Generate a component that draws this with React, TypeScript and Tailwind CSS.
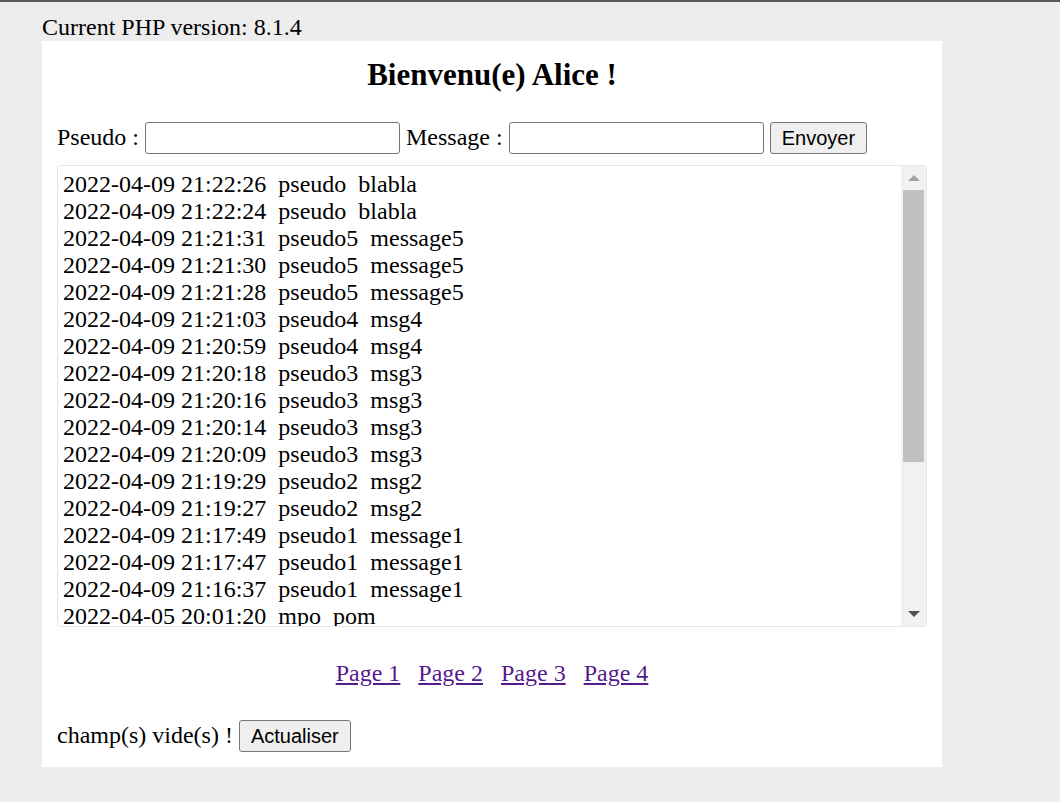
import React from "react";

const rows: [string, string, string][] = [
  ["2022-04-09 21:22:26", "pseudo", "blabla"],
  ["2022-04-09 21:22:24", "pseudo", "blabla"],
  ["2022-04-09 21:21:31", "pseudo5", "message5"],
  ["2022-04-09 21:21:30", "pseudo5", "message5"],
  ["2022-04-09 21:21:28", "pseudo5", "message5"],
  ["2022-04-09 21:21:03", "pseudo4", "msg4"],
  ["2022-04-09 21:20:59", "pseudo4", "msg4"],
  ["2022-04-09 21:20:18", "pseudo3", "msg3"],
  ["2022-04-09 21:20:16", "pseudo3", "msg3"],
  ["2022-04-09 21:20:14", "pseudo3", "msg3"],
  ["2022-04-09 21:20:09", "pseudo3", "msg3"],
  ["2022-04-09 21:19:29", "pseudo2", "msg2"],
  ["2022-04-09 21:19:27", "pseudo2", "msg2"],
  ["2022-04-09 21:17:49", "pseudo1", "message1"],
  ["2022-04-09 21:17:47", "pseudo1", "message1"],
  ["2022-04-09 21:16:37", "pseudo1", "message1"],
  ["2022-04-05 20:01:20", "mpo", "pom"],
];

export default function App() {
  return (
    <div className="min-h-[802px] bg-[#ededed] border-t-2 border-[#595959] text-black text-[24px] leading-[27px] font-['Liberation_Serif','Times_New_Roman',serif]">
      <div className="pl-[42px] pt-[12px]">Current PHP version: 8.1.4</div>
      <div className="ml-[42px] w-[900px] bg-white px-[15px] pb-[15px]">
        <h2 className="pt-[17px] text-center font-bold text-[31px] leading-[34px]">
          Bienvenu(e) Alice !
        </h2>
        <div className="mt-[30px] flex h-[32px] items-center gap-[6px]">
          <span className="-mt-[1px]">Pseudo :</span>
          <input className="h-[32px] w-[255px] rounded-[3px] border border-[#767676] bg-white" />
          <span className="-mt-[1px]">Message :</span>
          <input className="h-[32px] w-[255px] rounded-[3px] border border-[#767676] bg-white" />
          <button className="h-[32px] rounded-[3px] border border-[#767676] bg-[#efefef] px-[11px] font-['Liberation_Sans',Arial,sans-serif] text-[20px] leading-[30px] text-black">
            Envoyer
          </button>
        </div>
        <div className="mt-[11px] flex h-[462px] w-[870px] overflow-hidden rounded-[4px] border border-[#e6e6e6]">
          <div className="flex-1 overflow-hidden pl-[5px] pt-[5px]">
            {rows.map((r, i) => (
              <div key={i} className="whitespace-pre">
                {r[0]}  {r[1]}  {r[2]}
              </div>
            ))}
          </div>
          <div className="flex w-[25px] flex-col bg-[#f1f1f1]">
            <div className="flex h-[24px] items-center justify-center">
              <svg width="12" height="7" viewBox="0 0 12 7">
                <polygon points="6,0 12,6 0,6" fill="#a3a3a3" />
              </svg>
            </div>
            <div className="mx-[2px] h-[272px] bg-[#c1c1c1]" />
            <div className="flex-1" />
            <div className="flex h-[24px] items-center justify-center">
              <svg width="12" height="7" viewBox="0 0 12 7">
                <polygon points="0,0 12,0 6,6" fill="#505050" />
              </svg>
            </div>
          </div>
        </div>
        <div className="mt-[33px] flex justify-center gap-[18px] text-[#551a8b]">
          <a href="#" className="underline">Page 1</a>
          <a href="#" className="underline">Page 2</a>
          <a href="#" className="underline">Page 3</a>
          <a href="#" className="underline">Page 4</a>
        </div>
        <div className="mt-[33px] flex h-[32px] items-center gap-[6px]">
          <span className="-mt-[1px]">champ(s) vide(s) !</span>
          <button className="h-[32px] rounded-[3px] border border-[#767676] bg-[#efefef] px-[11px] font-['Liberation_Sans',Arial,sans-serif] text-[20px] leading-[30px] text-black">
            Actualiser
          </button>
        </div>
      </div>
    </div>
  );
}
